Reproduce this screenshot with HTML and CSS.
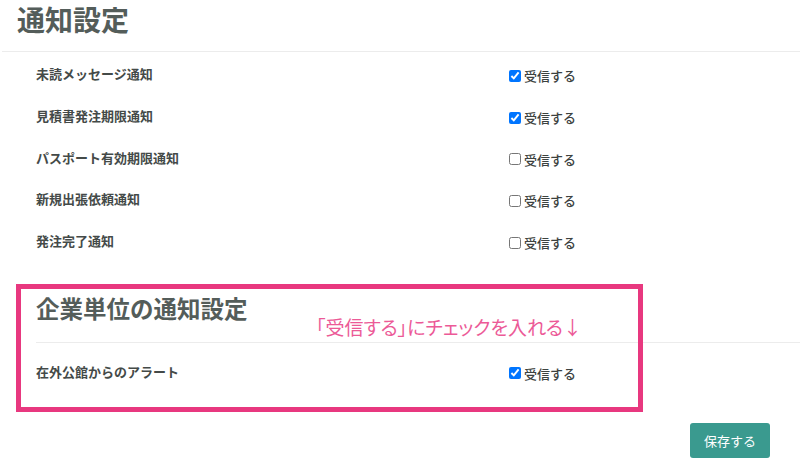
FILE: index.html
```html
<!DOCTYPE html>
<html lang="ja">
<head>
<meta charset="utf-8">
<link rel="stylesheet" href="styles.css">
</head>
<body>
<div class="page">
  <h1 class="title">通知設定</h1>
  <div class="divider"></div>
  <div class="rows">
    <div class="row"><span class="label">未読メッセージ通知</span><label class="check"><input type="checkbox" checked><span>受信する</span></label></div>
    <div class="row"><span class="label">見積書発注期限通知</span><label class="check"><input type="checkbox" checked><span>受信する</span></label></div>
    <div class="row"><span class="label">パスポート有効期限通知</span><label class="check"><input type="checkbox"><span>受信する</span></label></div>
    <div class="row"><span class="label">新規出張依頼通知</span><label class="check"><input type="checkbox"><span>受信する</span></label></div>
    <div class="row"><span class="label">発注完了通知</span><label class="check"><input type="checkbox"><span>受信する</span></label></div>
  </div>
  <h2 class="subtitle">企業単位の通知設定</h2>
  <div class="divider sub"></div>
  <div class="rows second">
    <div class="row"><span class="label">在外公館からのアラート</span><label class="check"><input type="checkbox" checked><span>受信する</span></label></div>
  </div>
  <div class="actions"><button class="save">保存する</button></div>
  <div class="highlight"></div>
  <div class="note">「受信する」にチェックを入れる↓</div>
</div>
</body>
</html>
```
FILE: styles.css
```css
* { box-sizing: border-box; }
html, body { margin: 0; padding: 0; background: #fff; }
body {
  font-family: "Noto Sans CJK JP", "Noto Sans", sans-serif;
  color: #3c4240;
  width: 800px;
  height: 467px;
  overflow: hidden;
}
.page { position: relative; width: 800px; height: 467px; }
.title {
  margin: 0;
  padding: 0 0 0 17px;
  height: 38px;
  line-height: 38px;
  font-size: 28px;
  font-weight: 700;
  color: #545d5a;
}
.divider {
  margin: 13px 0 0 2px;
  border-top: 1px solid #ececec;
}
.divider.sub { margin: 0 0 0 36px; }
.rows { padding: 2px 0 0 36px; }
.rows.second { padding-top: 8px; }
.row {
  display: grid;
  grid-template-columns: 473px 1fr;
  height: 41.7px;
  align-items: center;
}
.label {
  font-size: 13px;
  font-weight: 700;
  color: #444a48;
  margin-top: -2px;
}
.check {
  display: flex;
  align-items: center;
  gap: 3px;
  font-size: 13px;
  color: #3c4240;
  margin-top: 2px;
}
.check input {
  margin: 0;
  width: 12px;
  height: 12px;
}
.check span { font-weight: 500; }
.subtitle {
  margin: 30px 0 0 36px;
  height: 50px;
  line-height: 32px;
  font-size: 23.5px;
  font-weight: 700;
  color: #545d5a;
}
.actions {
  display: flex;
  justify-content: flex-end;
  padding: 30px 30px 0 0;
}
.save {
  width: 80px;
  height: 35px;
  border: none;
  border-radius: 3px;
  background: #3a9a8f;
  color: #fff;
  font-family: "Noto Sans CJK JP", sans-serif;
  font-size: 13px;
}
.highlight {
  position: absolute;
  left: 16px;
  top: 284px;
  width: 627px;
  height: 128px;
  border: 5px solid #e8387f;
}
.note {
  position: absolute;
  left: 316px;
  top: 313px;
  font-size: 19px;
  font-feature-settings: "palt";
  color: #ec5a97;
  line-height: 28px;
}
```
